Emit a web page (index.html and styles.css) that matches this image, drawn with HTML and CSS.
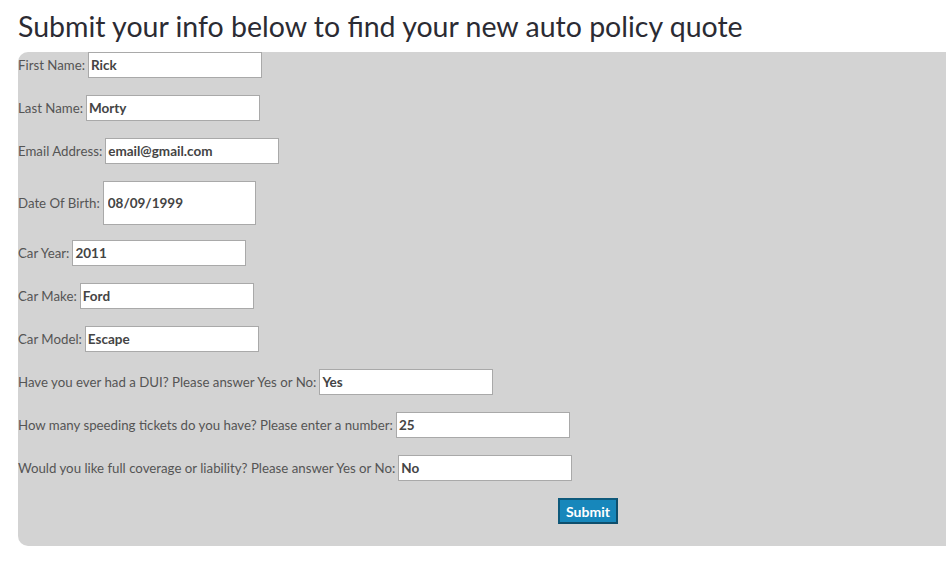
FILE: index.html
```html
<!DOCTYPE html>
<html>
<head>
<meta charset="utf-8">
<link rel="stylesheet" href="styles.css">
</head>
<body>
<h1 class="title">Submit your info below to find your new auto policy quote</h1>
<form class="quote-form">
  <div class="row"><label>First Name:</label><input class="field" type="text" value="Rick"></div>
  <div class="row"><label>Last Name:</label><input class="field" type="text" value="Morty"></div>
  <div class="row"><label>Email Address:</label><input class="field" type="text" value="email@gmail.com"></div>
  <div class="row row-date"><label>Date Of Birth:</label><input class="field field-date" type="text" value="08/09/1999"></div>
  <div class="row"><label>Car Year:</label><input class="field" type="text" value="2011"></div>
  <div class="row"><label>Car Make:</label><input class="field" type="text" value="Ford"></div>
  <div class="row"><label>Car Model:</label><input class="field" type="text" value="Escape"></div>
  <div class="row"><label>Have you ever had a DUI? Please answer Yes or No:</label><input class="field" type="text" value="Yes"></div>
  <div class="row"><label>How many speeding tickets do you have? Please enter a number:</label><input class="field" type="text" value="25"></div>
  <div class="row"><label>Would you like full coverage or liability? Please answer Yes or No:</label><input class="field" type="text" value="No"></div>
  <div class="actions"><button class="submit" type="button">Submit</button></div>
</form>
</body>
</html>
```
FILE: styles.css
```css
html, body {
  margin: 0;
  padding: 0;
  background: #fff;
  overflow: hidden;
}
body {
  font-family: "Lato", "Open Sans", sans-serif;
  padding-left: 18px;
}
.title {
  margin: 0;
  padding-top: 8px;
  height: 44px;
  font-size: 28.5px;
  font-weight: 400;
  line-height: 36px;
  color: #2b2b33;
}
.quote-form {
  background: #d3d3d3;
  border-radius: 10px 0 0 10px;
  padding: 0 0 22px 0;
  display: flex;
  flex-direction: column;
  gap: 17px;
}
.row {
  display: flex;
  align-items: center;
  gap: 3px;
  height: 26px;
}
.row-date {
  height: 44px;
  margin-bottom: -2px;
}
.row label {
  font-size: 13.25px;
  color: #555;
}
.field {
  box-sizing: border-box;
  width: 174px;
  height: 26px;
  margin: 0;
  padding: 0 2px;
  border: 1px solid #a9a9a9;
  background: #fff;
  font-family: "Lato", "Open Sans", sans-serif;
  font-size: 13.5px;
  font-weight: 700;
  color: #444;
  outline: none;
}
.field-date {
  width: 153px;
  height: 44px;
  padding-left: 4px;
}
.actions {
  height: 26px;
  padding-left: 540px;
  display: flex;
}
.submit {
  box-sizing: border-box;
  width: 60px;
  height: 26px;
  margin: 0;
  padding: 0;
  background: #1787bb;
  border: 2px solid #0e4e6c;
  border-top-color: #0e5a7c;
  border-left-color: #0e5a7c;
  color: #fff;
  font-family: "Lato", "Open Sans", sans-serif;
  font-size: 14px;
  font-weight: 700;
}
```
